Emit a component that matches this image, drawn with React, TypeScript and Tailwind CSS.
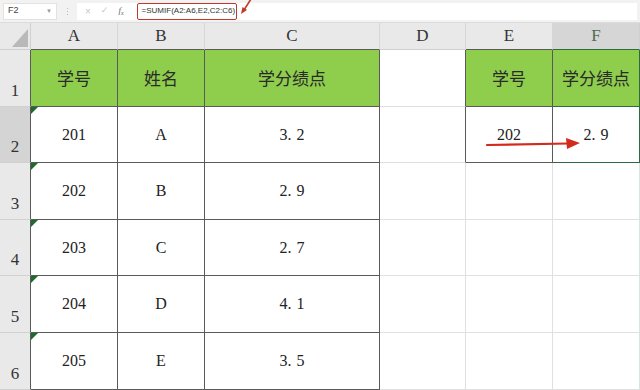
import type {ReactNode} from "react";

const COLS = ["A", "B", "C", "D", "E", "F"];
const ROW_H = ["h-[57px]", "h-[56px]", "h-[57px]", "h-[56px]", "h-[57px]", "h-[57px]"];

const DATA = [
    ["201", "A", "3.2"],
    ["202", "B", "2.9"],
    ["203", "C", "2.7"],
    ["204", "D", "4.1"],
    ["205", "E", "3.5"],
];

const serif = "font-['Liberation_Serif','Noto_Sans_CJK_SC',serif]";
const cjk = "font-['Noto_Sans_CJK_SC',sans-serif]";

function Num({value}: {value: string}) {
    // SimSun-style half-width dot leaves a gap after it
    const [a, b] = value.split(".");
    if (b === undefined) return <>{value}</>;
    return (
        <>
            {a}
            <span className="mr-[5px]">.</span>
            {b}
        </>
    );
}

function Cell({
    className = "",
    children,
    flag = false,
}: {
    className?: string;
    children?: ReactNode;
    flag?: boolean;
}) {
    return (
        <div className={`relative flex items-center justify-center border-r border-b ${className}`}>
            {flag && (
                <div className="absolute left-0 top-0 w-0 h-0 border-t-[7px] border-r-[7px] border-t-[#1e6b2e] border-r-transparent" />
            )}
            {children}
        </div>
    );
}

function Toolbar() {
    return (
        <div className="h-[23px] bg-[#f2f2f2] border-b border-[#dcdcdc] flex items-center px-[3px] gap-[6px]">
            <div className="w-[54px] h-[17px] bg-white border border-[#e2e2e2] flex items-center justify-between px-[4px]">
                <span className="text-[9px] text-[#444] font-['Liberation_Sans',sans-serif]">F2</span>
                <span className="text-[6px] text-[#999]">▼</span>
            </div>
            <div className="w-[8px] flex flex-col items-center gap-[2px]">
                <span className="w-[1px] h-[1px] bg-[#bbb]" />
                <span className="w-[1px] h-[1px] bg-[#bbb]" />
                <span className="w-[1px] h-[1px] bg-[#bbb]" />
            </div>
            <div className="flex-1 h-[17px] bg-white flex items-center gap-[10px] pl-[8px]">
                <span className="text-[10px] text-[#c8c8c8] font-['Liberation_Sans',sans-serif]">×</span>
                <span className="text-[9px] text-[#c8c8c8] font-['DejaVu_Sans',sans-serif]">✓</span>
                <span className="text-[9px] italic text-[#666] font-['Liberation_Serif',serif] mr-[3px]">
                    f<sub className="text-[6px]">x</sub>
                </span>
                <div className="relative">
                    <div className="h-[17px] w-[100px] border-[1.5px] border-[#c0392b] rounded-[2px] flex items-center px-[4px]">
                        <span className="text-[8px] text-[#333] font-['Liberation_Sans',sans-serif] whitespace-nowrap">
                            =SUMIF(A2:A6,E2,C2:C6)
                        </span>
                    </div>
                    <svg className="absolute left-[102px] top-[-4px]" width="14" height="20" viewBox="0 0 14 20">
                        <path d="M12 0 L5 11" stroke="#c0392b" strokeWidth="1.6" />
                        <path d="M2 15 L3.5 8 L8 11 Z" fill="#c0392b" />
                    </svg>
                </div>
            </div>
        </div>
    );
}

export default function App() {
    return (
        <div className="w-[640px] h-[390px] overflow-hidden bg-white flex flex-col">
            <Toolbar />
            <div className="relative grid grid-cols-[31px_87px_87px_175px_86px_87px_87px]">
                {/* header row */}
                <div className="h-[27px] bg-[#e9e9e9] border-r border-b border-[#cfcfcf] relative">
                    <div className="absolute right-[2px] bottom-[2px] w-0 h-0 border-l-[16px] border-b-[18px] border-l-transparent border-b-[#b9b9b9]" />
                </div>
                {COLS.map((c) => (
                    <div
                        key={c}
                        className={`h-[27px] flex items-center justify-center border-r border-b text-[17px] ${serif} ${
                            c === "F"
                                ? "bg-[#d6d6d6] text-[#4d6b55] border-r-[#cfcfcf] border-b-[#2e6b43]"
                                : c === "D"
                                  ? "bg-[#e9e9e9] text-[#333] border-r-[#d6d6d6] border-b-[#d0d0d0]"
                                  : "bg-[#e9e9e9] text-[#333] border-r-[#d6d6d6] border-b-[#5a5a5a]"
                        }`}
                    >
                        {c}
                    </div>
                ))}

                {/* rows */}
                {ROW_H.map((h, r) => {
                    const rowNo = r + 1;
                    const data = r > 0 ? DATA[r - 1] : null;
                    const dark = "border-[#5a5a5a]";
                    const light = "border-[#e0e0e0]";
                    return (
                        <div key={r} className="contents">
                            <div
                                className={`${h} border-r border-b border-r-[#5a5a5a] border-b-[#d0d0d0] flex items-end justify-center pb-[3px] text-[17px] text-[#333] ${serif} ${
                                    rowNo === 2 ? "bg-[#d4d4d4]" : "bg-[#e9e9e9]"
                                }`}
                            >
                                {rowNo}
                            </div>
                            {r === 0 ? (
                                <>
                                    <Cell className={`${h} ${dark} bg-[#8fce4c] text-[17px] text-[#2a2a2a] ${cjk}`}>学号</Cell>
                                    <Cell className={`${h} ${dark} bg-[#8fce4c] text-[17px] text-[#2a2a2a] ${cjk}`}>姓名</Cell>
                                    <Cell className={`${h} ${dark} bg-[#8fce4c] text-[17px] text-[#2a2a2a] ${cjk}`}>学分绩点</Cell>
                                    <Cell className={`${h} border-r-[#5a5a5a] border-b-[#e0e0e0]`} />
                                    <Cell className={`${h} ${dark} bg-[#8fce4c] text-[17px] text-[#2a2a2a] ${cjk}`}>学号</Cell>
                                    <Cell className={`${h} border-r-[#2e6b43] border-b-[#2e6b43] bg-[#8fce4c] text-[17px] text-[#2a2a2a] ${cjk}`}>
                                        学分绩点
                                    </Cell>
                                </>
                            ) : (
                                <>
                                    <Cell flag className={`${h} ${dark} text-[16px] text-[#222] ${serif}`}>
                                        {data![0]}
                                    </Cell>
                                    <Cell className={`${h} ${dark} text-[16px] text-[#222] ${serif}`}>{data![1]}</Cell>
                                    <Cell className={`${h} ${dark} text-[16px] text-[#222] ${serif}`}>
                                        <Num value={data![2]} />
                                    </Cell>
                                    <Cell
                                        className={`${h} border-b-[#e0e0e0] ${
                                            rowNo === 2 ? "border-r-[#5a5a5a]" : "border-r-[#e0e0e0]"
                                        }`}
                                    />
                                    {rowNo === 2 ? (
                                        <>
                                            <Cell className={`${h} ${dark} text-[16px] text-[#222] ${serif}`}>202</Cell>
                                            <Cell className={`${h} border-r-[#2e6b43] border-b-[#2e6b43] text-[16px] text-[#222] ${serif}`}>
                                                <Num value="2.9" />
                                            </Cell>
                                        </>
                                    ) : (
                                        <>
                                            <Cell className={`${h} ${light}`} />
                                            <Cell className={`${h} border-b-[#e0e0e0] border-r-[#d6e6dc]`} />
                                        </>
                                    )}
                                </>
                            )}
                        </div>
                    );
                })}

                {/* red arrow over E2 -> F2 */}
                <svg className="absolute left-[486px] top-[112px]" width="96" height="16" viewBox="0 0 96 16">
                    <path d="M1 10 L82 8.5" stroke="#d42a1e" strokeWidth="2.2" strokeLinecap="round" />
                    <path d="M94 8 L80 3 L81 14 Z" fill="#d42a1e" />
                </svg>
            </div>
        </div>
    );
}
